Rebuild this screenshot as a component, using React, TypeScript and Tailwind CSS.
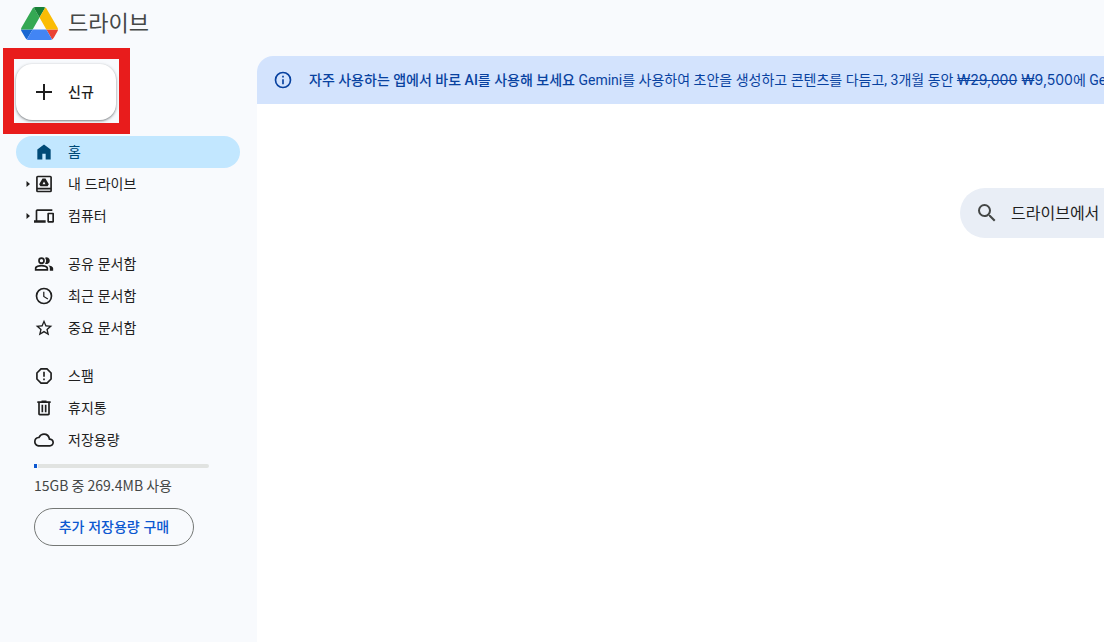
import type { ReactNode } from "react";

interface IconProps {
  className?: string;
  children: ReactNode;
}

function Icon({ className = "size-5", children }: IconProps) {
  return (
    <svg viewBox="0 0 24 24" className={`shrink-0 ${className}`} fill="currentColor" aria-hidden="true">
      {children}
    </svg>
  );
}

interface NavItem {
  label: string;
  icon: ReactNode;
  active?: boolean;
  expandable?: boolean;
}

const NAV_GROUPS: NavItem[][] = [
  [
    { label: "홈", active: true, icon: <path d="M4 21V9l8-6 8 6v12h-6v-7h-4v7z" /> },
    {
      label: "내 드라이브",
      expandable: true,
      icon: (
        <>
          <path
            fillRule="evenodd"
            d="M4.5 2h15A2 2 0 0 1 21.500 4v16a2 2 0 0 1-2 2h-15a2 2 0 0 1-2-2V4a2 2 0 0 1 2-2zm0 2v12.500h15V4zm0 14.500V20h15v-1.500z"
          />
          <path
            fillRule="evenodd"
            d="M10.200 5.500h3.600l4 6.700-1.500 2.600H7.700l-1.500-2.600zM12 9l-1.800 3.200h3.600z"
          />
        </>
      ),
    },
    {
      label: "컴퓨터",
      expandable: true,
      icon: (
        <path d="M4 6h18V4H4c-1.100 0-2 .9-2 2v11H0v3h14v-3H4V6zm19 2h-6c-.55 0-1 .45-1 1v10c0 .55.45 1 1 1h6c.55 0 1-.45 1-1V9c0-.55-.45-1-1-1zm-1 10h-4v-8h4v8z" />
      ),
    },
  ],
  [
    {
      label: "공유 문서함",
      icon: (
        <>
          <path
            fillRule="evenodd"
            d="M9 4a4 4 0 1 0 0 8 4 4 0 0 0 0-8zm0 2a2 2 0 1 1 0 4 2 2 0 0 1 0-4zM9 13c-2.700 0-8 1.300-8 4v3h16v-3c0-2.700-5.300-4-8-4zm6 5H3v-1c0-.7 3-2 6-2s6 1.300 6 2z"
          />
          <path d="M13.200 11.600a6 6 0 0 0 0-7.200A4 4 0 1 1 13.200 11.600zM19 20v-3c0-1.500-.8-2.700-2-3.600 3 .5 6 1.600 6 3.600v3z" />
        </>
      ),
    },
    {
      label: "최근 문서함",
      icon: (
        <path d="M12 2a10 10 0 1 0 0 20 10 10 0 0 0 0-20zm0 18a8 8 0 1 1 0-16 8 8 0 0 1 0 16zm.5-13H11v6l5.250 3.150.75-1.230-4.500-2.670z" />
      ),
    },
    {
      label: "중요 문서함",
      icon: (
        <path d="M22 9.240l-7.190-.62L12 2 9.190 8.630 2 9.240l5.460 4.730L5.820 21 12 17.270 18.180 21l-1.630-7.030L22 9.240zM12 15.400l-3.760 2.270 1-4.280-3.320-2.880 4.380-.38L12 6.100l1.710 4.040 4.380.38-3.320 2.880 1 4.280L12 15.400z" />
      ),
    },
  ],
  [
    {
      label: "스팸",
      icon: (
        <>
          <path
            fillRule="evenodd"
            d="M8 2.500h8L21.500 8v8L16 21.500H8L2.500 16V8zm.8 2L4.500 8.800v6.400l4.300 4.300h6.400l4.300-4.300V8.800l-4.300-4.300z"
          />
          <path d="M11 7h2v6h-2zM11 15h2v2h-2z" />
        </>
      ),
    },
    {
      label: "휴지통",
      icon: (
        <path
          fillRule="evenodd"
          d="M9 3h6v1h5v2h-1v13c0 1.100-.9 2-2 2H7c-1.100 0-2-.9-2-2V6H4V4h5zM7 6v13h10V6zm2 2h2v9H9zm4 0h2v9h-2z"
        />
      ),
    },
    {
      label: "저장용량",
      icon: (
        <path d="M19.350 10.040A7.490 7.490 0 0 0 12 4C9.110 4 6.600 5.640 5.350 8.040A5.994 5.994 0 0 0 0 14c0 3.310 2.690 6 6 6h13c2.760 0 5-2.240 5-5 0-2.640-2.050-4.780-4.650-4.960zM19 18H6c-2.210 0-4-1.790-4-4 0-2.050 1.530-3.760 3.560-3.970l1.070-.11.5-.95A5.469 5.469 0 0 1 12 6c2.620 0 4.880 1.860 5.390 4.430l.3 1.500 1.530.11A2.980 2.980 0 0 1 22 15c0 1.650-1.350 3-3 3z" />
      ),
    },
  ],
];

function DriveLogo() {
  return (
    <svg viewBox="0 0 87.300 78" className="h-[33px] w-[37px]" aria-hidden="true">
      <path fill="#1967d2" d="m6.600 66.850 3.850 6.650c.8 1.400 1.950 2.500 3.300 3.300l13.750-23.800h-27.500c0 1.550.4 3.100 1.200 4.500z" />
      <path fill="#34a853" d="m43.650 25-13.750-23.800c-1.350.8-2.500 1.900-3.300 3.300l-25.400 44a9.060 9.060 0 0 0 -1.200 4.500h27.500z" />
      <path fill="#ea4335" d="m73.550 76.800c1.350-.8 2.500-1.900 3.300-3.300l1.600-2.750 7.650-13.250c.8-1.400 1.200-2.950 1.200-4.500h-27.500l13.750 23.800z" />
      <path fill="#188038" d="m43.650 25 13.750-23.800c-1.350-.8-2.900-1.200-4.500-1.200h-18.500c-1.600 0-3.150.45-4.500 1.200z" />
      <path fill="#4285f4" d="m59.800 53h-32.300l-13.750 23.800c1.350.8 2.900 1.200 4.500 1.200h50.800c1.600 0 3.150-.45 4.500-1.200z" />
      <path fill="#fbbc04" d="m73.400 26.500-12.700-22c-.8-1.400-1.950-2.500-3.300-3.300l-13.750 23.800 16.150 28h27.450c0-1.550-.4-3.100-1.200-4.500z" />
    </svg>
  );
}

function NavLink({ item }: { item: NavItem }) {
  return (
    <a
      href="#"
      aria-current={item.active ? "page" : undefined}
      className={`flex h-8 items-center rounded-full pl-[10px] text-sm ${
        item.active ? "bg-[#c2e7ff] text-[#004a77]" : "text-[#1f1f1f]"
      }`}
    >
      <span className="w-2">
        {item.expandable && (
          <svg viewBox="0 0 4 6" className="h-[6px] w-1" fill="currentColor" aria-hidden="true">
            <path d="M.5 0L4 3 .5 6z" />
          </svg>
        )}
      </span>
      <Icon>{item.icon}</Icon>
      <span className="ml-[14px]">{item.label}</span>
    </a>
  );
}

function Sidebar() {
  return (
    <aside className="w-[257px] shrink-0 px-4 pt-4">
      <div className="relative w-[100px]">
        <button
          type="button"
          className="flex h-14 w-full items-center gap-3 rounded-2xl bg-white pl-4 text-sm font-medium text-[#1f1f1f] shadow-[0_1px_2px_rgba(60,64,67,0.5),0_1px_3px_1px_rgba(60,64,67,0.15)]"
        >
          <Icon className="size-6">
            <path d="M11 4h2v7h7v2h-7v7h-2v-7H4v-2h7z" />
          </Icon>
          신규
        </button>
        <div className="pointer-events-none absolute -top-4 -right-[14px] -bottom-[14px] -left-[13px] border-[11px] border-[#e81c1c]" />
      </div>

      <nav className="mt-4 flex w-56 flex-col gap-4">
        {NAV_GROUPS.map((group) => (
          <div key={group[0].label}>
            {group.map((item) => (
              <NavLink key={item.label} item={item} />
            ))}
          </div>
        ))}
      </nav>

      <div className="mt-2 pl-[18px]">
        <div className="flex h-1 w-[175px] gap-px" role="img" aria-label="저장용량 사용량">
          <div className="w-[3px] bg-[#0b57d0]" />
          <div className="flex-1 rounded-r-full bg-[#e1e3e1]" />
        </div>
        <p className="mt-[7px] font-['Noto_Sans_CJK_KR',sans-serif] text-sm text-[#444746]">15GB 중 269.4MB 사용</p>
        <button
          type="button"
          className="mt-[13px] h-[38px] w-40 rounded-full border border-[#747775] text-sm font-medium text-[#0b57d0]"
        >
          추가 저장용량 구매
        </button>
      </div>
    </aside>
  );
}

function PromoBanner() {
  return (
    <div className="flex h-12 items-center overflow-hidden bg-[#d3e3fd] pl-4 font-['Roboto','Noto_Sans_CJK_KR',sans-serif] text-sm whitespace-nowrap text-[#0842a0]">
      <Icon>
        <path d="M11 7h2v2h-2zm0 4h2v6h-2zm1-9a10 10 0 1 0 0 20 10 10 0 0 0 0-20zm0 18a8 8 0 1 1 0-16 8 8 0 0 1 0 16z" />
      </Icon>
      <p className="ml-4">
        <strong className="font-medium">자주 사용하는 앱에서 바로 AI를 사용해 보세요</strong>{" "}
        Gemini를 사용하여 초안을 생성하고 콘텐츠를 다듬고, 3개월 동안{" "}
        <span className="font-['Inter','Noto_Sans_CJK_KR',sans-serif]">
          <s>₩29,000</s> ₩9,500에
        </span>{" "}
        Ge
      </p>
    </div>
  );
}

export default function App() {
  return (
    <div className="flex min-h-screen flex-col overflow-hidden bg-[#f8fafd] font-['Inter','Noto_Sans_CJK_KR',sans-serif]">
      <header className="flex h-12 items-center gap-[10px] pb-px pl-[21px]">
        <DriveLogo />
        <h1 className="text-[22px] text-[#444746]">드라이브</h1>
      </header>

      <div className="flex flex-1">
        <Sidebar />
        <main className="mt-2 min-w-0 flex-1 overflow-hidden rounded-tl-2xl bg-white">
          <PromoBanner />
          <label className="mt-[84px] ml-auto flex h-[50px] w-36 items-center gap-3 rounded-l-full bg-[#e9eef6] pl-[15px] text-[#444746]">
            <Icon className="size-6">
              <path d="M15.500 14h-.79l-.28-.27A6.471 6.471 0 0 0 16 9.500 6.500 6.500 0 1 0 9.500 16c1.610 0 3.090-.59 4.230-1.570l.27.28v.79l5 4.990L20.490 19l-4.990-5zm-6 0C7.010 14 5 11.990 5 9.500S7.010 5 9.500 5 14 7.010 14 9.500 11.990 14 9.500 14z" />
            </Icon>
            <input
              type="text"
              aria-label="드라이브에서 검색"
              placeholder="드라이브에서"
              className="w-full min-w-0 bg-transparent text-base outline-none placeholder:text-[#1f1f1f]"
            />
          </label>
        </main>
      </div>
    </div>
  );
}
